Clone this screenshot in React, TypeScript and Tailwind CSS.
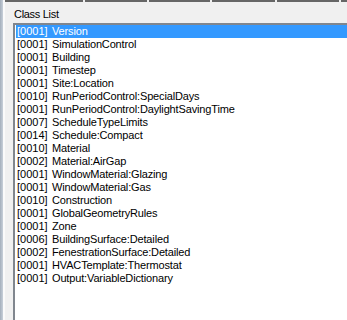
const classes: [string, string][] = [
    ['0001', 'Version'],
    ['0001', 'SimulationControl'],
    ['0001', 'Building'],
    ['0001', 'Timestep'],
    ['0001', 'Site:Location'],
    ['0010', 'RunPeriodControl:SpecialDays'],
    ['0001', 'RunPeriodControl:DaylightSavingTime'],
    ['0007', 'ScheduleTypeLimits'],
    ['0014', 'Schedule:Compact'],
    ['0010', 'Material'],
    ['0002', 'Material:AirGap'],
    ['0001', 'WindowMaterial:Glazing'],
    ['0001', 'WindowMaterial:Gas'],
    ['0010', 'Construction'],
    ['0001', 'GlobalGeometryRules'],
    ['0001', 'Zone'],
    ['0006', 'BuildingSurface:Detailed'],
    ['0002', 'FenestrationSurface:Detailed'],
    ['0001', 'HVACTemplate:Thermostat'],
    ['0001', 'Output:VariableDictionary'],
];

// bottoms of the toolbar buttons peeking in at the top
const buttonWidths = ['w-[78px]', 'w-[62px]', 'w-[61px]', 'w-[63px]', 'w-[62px]', 'flex-1'];

const App = () => {
    const selected = 0;

    return (
        <div className="w-[347px] h-[320px] flex bg-[#f0f0f0] overflow-hidden font-['Liberation_Sans',Arial,sans-serif] text-[11px] text-black select-none">
            {/* window frame edge */}
            <div className="flex h-full">
                <div className="w-[3px] h-full bg-gradient-to-r from-[#a3aebb] to-[#c8d0d9]" />
                <div className="w-[2px] h-full bg-[#fafafa]" />
            </div>

            <div className="flex-1 flex flex-col min-w-0">
                <div className="flex gap-[2px] h-[3px]">
                    {buttonWidths.map((w, i) => (
                        <div key={i} className={`${w} h-[2px] bg-[#666666]`} />
                    ))}
                </div>

                <div className="h-[20px] pl-[9px] flex items-center leading-none pt-[3px] tracking-[-0.3px]">
                    Class List
                </div>

                <div className="flex-1 ml-[8px] bg-white border-t-2 border-l-2 border-[#80868e] pl-[1px]">
                    {classes.map(([count, name], i) => (
                        <div
                            key={name}
                            className={`h-[13px] flex items-center leading-none whitespace-nowrap ${i === selected ? 'bg-[#3399ff] text-white' : ''}`}
                        >
                            <span className="w-[36px] pl-[1px] shrink-0">[{count}]</span>
                            <span className="tracking-[-0.15px]">{name}</span>
                        </div>
                    ))}
                </div>
            </div>
        </div>
    );
};

export default App;
